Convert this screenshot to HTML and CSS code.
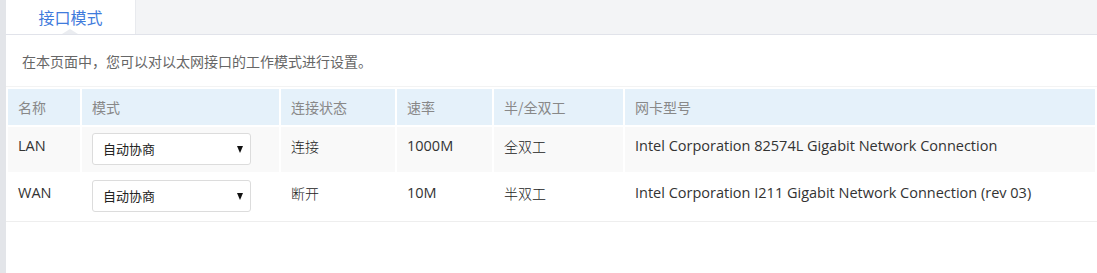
FILE: index.html
```html
<!DOCTYPE html>
<html lang="zh-CN">
<head>
<meta charset="utf-8">
<title>接口模式</title>
<link rel="stylesheet" href="styles.css">
</head>
<body>
<div class="page">
  <div class="tabbar">
    <div class="tab">接口模式<span class="notch"></span></div>
  </div>
  <div class="panel">
    <p class="desc">在本页面中，您可以对以太网接口的工作模式进行设置。</p>
    <table class="grid">
      <colgroup>
        <col class="c-name"><col class="c-mode"><col class="c-state"><col class="c-speed"><col class="c-duplex"><col class="c-nic">
      </colgroup>
      <thead>
        <tr>
          <th>名称</th><th>模式</th><th>连接状态</th><th>速率</th><th>半/全双工</th><th>网卡型号</th>
        </tr>
      </thead>
      <tbody>
        <tr class="odd">
          <td class="en">LAN</td>
          <td class="sel-cell"><div class="select"><span class="select-text">自动协商</span><span class="caret"></span></div></td>
          <td class="zh">连接</td><td class="en">1000M</td><td class="zh">全双工</td><td class="en">Intel Corporation 82574L Gigabit Network Connection</td>
        </tr>
        <tr>
          <td class="en">WAN</td>
          <td class="sel-cell"><div class="select"><span class="select-text">自动协商</span><span class="caret"></span></div></td>
          <td class="zh">断开</td><td class="en">10M</td><td class="zh">半双工</td><td class="en">Intel Corporation I211 Gigabit Network Connection (rev 03)</td>
        </tr>
      </tbody>
    </table>
  </div>
</div>
</body>
</html>
```
FILE: styles.css
```css
html, body {
  margin: 0;
  padding: 0;
  height: 100%;
}
body {
  background: #e3e5e9;
  font-family: "Noto Sans CJK SC", sans-serif;
  font-size: 14px;
  color: #333;
}
.page {
  margin-left: 6px;
  background: #fff;
  height: 100%;
}
.tabbar {
  height: 34px;
  background: #f3f4f6;
  border-bottom: 1px solid #e1e3ea;
  display: flex;
}
.tab {
  position: relative;
  width: 129px;
  height: 34px;
  background: #fff;
  border-right: 1px solid #e8eaee;
  color: #3f7bdc;
  font-size: 16px;
  line-height: 34px;
  text-align: center;
}
.notch {
  position: absolute;
  left: 56px;
  bottom: 0;
  width: 0;
  height: 0;
  border-left: 8px solid transparent;
  border-right: 8px solid transparent;
  border-bottom: 5px solid #eaecf0;
}
.panel {
  padding-top: 16px;
}
.desc {
  margin: 0 0 15px 16px;
  font-size: 14px;
  line-height: 20px;
  color: #666;
}
.grid {
  width: 100%;
  table-layout: fixed;
  border-collapse: separate;
  border-spacing: 2px;
  border-top: 1px solid #f3f3f3;
  border-bottom: 1px solid #eeeeee;
}
.c-name { width: 72px; }
.c-mode { width: 197px; }
.c-state { width: 114px; }
.c-speed { width: 95px; }
.c-duplex { width: 129px; }
.grid th {
  height: 36px;
  padding: 0 10px;
  background: #e5f1fa;
  color: #888;
  font-weight: normal;
  text-align: left;
  font-size: 14px;
  line-height: 20px;
  vertical-align: middle;
}
.grid td {
  height: 45px;
  box-sizing: border-box;
  padding: 9px 10px 0;
  vertical-align: top;
  line-height: 20px;
  color: #333;
  white-space: nowrap;
  font-weight: normal;
}
.grid td.zh {
  font-family: "Noto Sans CJK SC", sans-serif;
  font-size: 14px;
  font-weight: 300;
  color: #222;
}
.grid td.en {
  font-family: "Open Sans", sans-serif;
  font-size: 14.5px;
}
.grid tr.odd td {
  background: #f9f9f9;
}
.grid td.sel-cell {
  padding-top: 6px;
}
.select {
  position: relative;
  box-sizing: border-box;
  width: 159px;
  height: 32px;
  border: 1px solid #dcdcdc;
  border-radius: 3px;
  background: #fff;
  padding-left: 10px;
  display: flex;
  align-items: center;
}
.select-text {
  font-size: 13px;
  color: #222;
}
.caret {
  position: absolute;
  right: 7px;
  top: 12px;
  width: 0;
  height: 0;
  border-left: 3.5px solid transparent;
  border-right: 3.5px solid transparent;
  border-top: 7px solid #111;
}
```
